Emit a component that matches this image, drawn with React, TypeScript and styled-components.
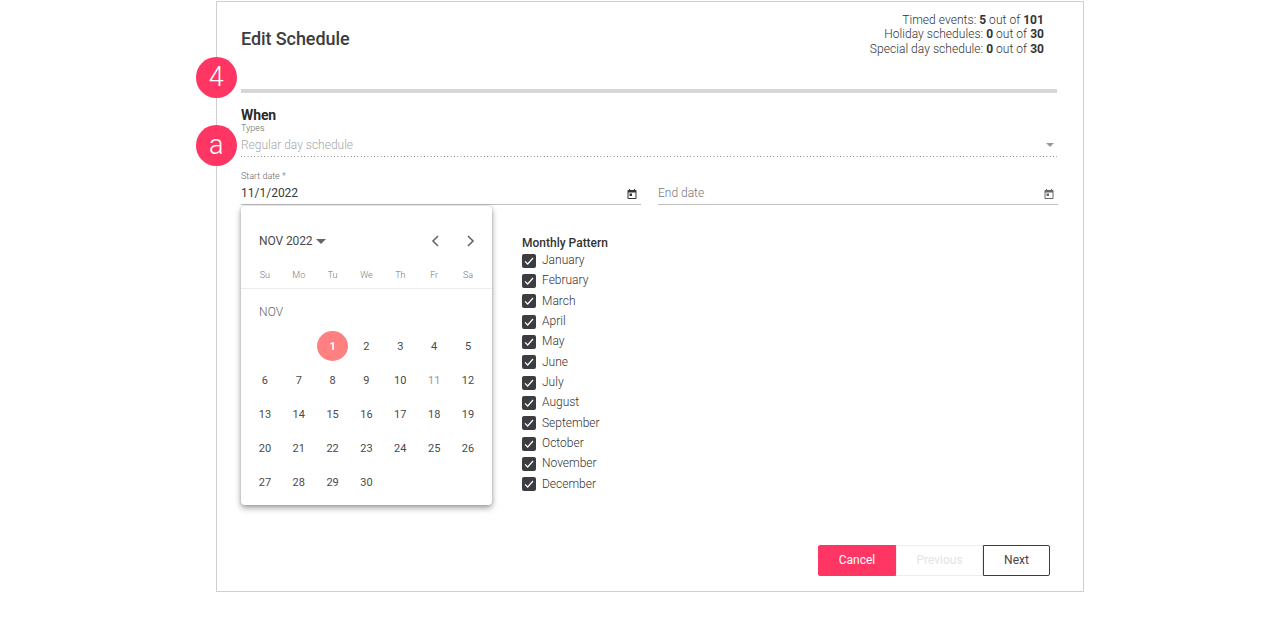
import React from "react";
import styled, { createGlobalStyle } from "styled-components";

const Global = createGlobalStyle`
  html, body { margin: 0; padding: 0; background: #fff; }
  body { font-family: Roboto, "Liberation Sans", sans-serif; color: #333; }
`;

const Frame = styled.div`
  position: relative;
  box-sizing: border-box;
  width: 868px;
  height: 591px;
  margin: 1px 0 0 216px;
  border: 1px solid #cfcfcf;
  padding: 0 26px 0 24px;
  display: flex;
  flex-direction: column;
`;

const Header = styled.header`
  height: 87px;
  flex: none;
  display: flex;
  justify-content: space-between;
  align-items: flex-start;
  padding-right: 13px;
  border-bottom: 4px solid #d6d6d6;
  box-sizing: content-box;
`;

const Title = styled.h1`
  margin: 26px 0 0;
  font-size: 18px;
  line-height: 22px;
  font-weight: 500;
  letter-spacing: -0.08px;
  color: #3c3c41;
`;

const Stats = styled.div`
  margin-top: 11px;
  text-align: right;
  font-size: 12px;
  line-height: 14.4px;
  font-weight: 300;
  letter-spacing: 0.05px;
  color: #333;
  b { font-weight: 700; }
`;

const SectionTitle = styled.h2`
  margin: 14px 0 0;
  font-size: 14px;
  line-height: 16px;
  font-weight: 700;
  letter-spacing: -0.1px;
  color: #2b2b2b;
`;

const SmallLabel = styled.label`
  display: block;
  font-size: 9px;
  line-height: 10px;
  font-weight: 300;
  color: #666;
`;

const SelectField = styled.div`
  width: 816px;
`;

const SelectRow = styled.div`
  height: 23px;
  display: flex;
  align-items: center;
  justify-content: space-between;
  font-size: 12px;
  font-weight: 300;
  color: #a8a8a8;
  padding-bottom: 1px;
  background: linear-gradient(to right, #777 1px, transparent 1px) left bottom / 3.33px 1px repeat-x;
`;

const Caret = styled.span<{ $color: string; $size: number }>`
  display: inline-block;
  width: 0;
  height: 0;
  border-left: ${(p) => p.$size}px solid transparent;
  border-right: ${(p) => p.$size}px solid transparent;
  border-top: ${(p) => p.$size}px solid ${(p) => p.$color};
`;

const SelectCaret = styled(Caret)`
  margin-right: 3px;
`;

const DateRow = styled.div`
  margin-top: 14px;
  width: 817px;
  display: grid;
  grid-template-columns: 400px 400px;
  column-gap: 17px;
  align-items: end;
`;

const DateValue = styled.div<{ $placeholder?: boolean }>`
  height: 23px;
  display: flex;
  align-items: center;
  justify-content: space-between;
  font-size: 12px;
  font-weight: ${(p) => (p.$placeholder ? 300 : 400)};
  color: ${(p) => (p.$placeholder ? "#777" : "#3a3a3a")};
  border-bottom: 1px solid #bdbdbd;
  padding-right: 3px;
  svg { margin-top: 2px; }
`;

const Body = styled.div`
  display: flex;
  align-items: flex-start;
  gap: 30px;
  flex: none;
`;

const Calendar = styled.div`
  width: 251px;
  height: 299px;
  margin-top: 1px;
  border-radius: 4px;
  background: #fff;
  box-shadow: 0 3px 6px rgba(0, 0, 0, 0.38), 0 0 3px rgba(0, 0, 0, 0.14);
  flex: none;
`;

const CalHeader = styled.div`
  height: 70px;
  padding: 0 14px 0 18px;
  display: flex;
  align-items: center;
  justify-content: space-between;
`;

const MonthButton = styled.div`
  display: flex;
  align-items: center;
  gap: 4px;
  font-size: 12px;
  font-weight: 400;
  letter-spacing: -0.1px;
  color: #4a4a4a;
`;

const Arrows = styled.div`
  display: flex;
  gap: 18px;
`;

const Weekdays = styled.div`
  display: grid;
  grid-template-columns: repeat(7, 33.85px);
  padding: 0 0 6px 7px;
  height: 13px;
  margin-top: -7px;
  border-bottom: 1px solid #ececec;
`;

const Weekday = styled.span`
  text-align: center;
  font-size: 9px;
  line-height: 13px;
  font-weight: 300;
  color: #777;
`;

const MonthLabel = styled.div`
  padding: 16px 0 0 18px;
  height: 24px;
  font-size: 12px;
  line-height: 14px;
  font-weight: 300;
  letter-spacing: 0.1px;
  color: #666;
`;

const Days = styled.div`
  display: grid;
  grid-template-columns: repeat(7, 33.85px);
  grid-auto-rows: 34px;
  padding-left: 7px;
`;

const Day = styled.div<{ $selected?: boolean; $muted?: boolean }>`
  display: flex;
  align-items: center;
  justify-content: center;
  font-size: 11px;
  font-weight: ${(p) => (p.$selected ? 700 : 400)};
  color: ${(p) => (p.$selected ? "#fff" : p.$muted ? "#999" : "#4a4a4a")};
  position: relative;
  z-index: 0;
  &::before {
    content: ${(p) => (p.$selected ? '""' : "none")};
    position: absolute;
    z-index: -1;
    width: 31px;
    height: 30px;
    border-radius: 50%;
    background: #ff8080;
    left: 1.5px;
    top: 2px;
  }
`;

const Pattern = styled.div`
  padding-top: 31px;
`;

const PatternTitle = styled.div`
  font-size: 12px;
  line-height: 14px;
  font-weight: 500;
  color: #333;
`;

const CheckRow = styled.div`
  height: 20.33px;
  display: flex;
  align-items: center;
  gap: 6px;
  font-size: 12px;
  font-weight: 300;
  color: #333;
`;

const CheckBox = styled.span`
  width: 14px;
  height: 14px;
  margin-top: 1px;
  border-radius: 2px;
  background: #3c3c41;
  display: flex;
  align-items: center;
  justify-content: center;
`;

const Footer = styled.div`
  display: flex;
  justify-content: flex-end;
  padding-right: 7px;
  margin-top: 40px;
`;

const Button = styled.button<{ $kind: "primary" | "disabled" | "outline"; $width: number }>`
  box-sizing: border-box;
  width: ${(p) => p.$width}px;
  height: 31px;
  padding: 0 0 2px;
  font-family: inherit;
  font-size: 12px;
  font-weight: 400;
  background: ${(p) => (p.$kind === "primary" ? "#ff3663" : "#fff")};
  color: ${(p) => (p.$kind === "primary" ? "#fff" : p.$kind === "disabled" ? "#e4e4e4" : "#444")};
  border: 1px solid ${(p) => (p.$kind === "primary" ? "#ff3663" : p.$kind === "disabled" ? "#ececec" : "#3c3c41")};
  border-radius: ${(p) => (p.$kind === "primary" ? "2px 0 0 2px" : p.$kind === "outline" ? "0 2px 2px 0" : "0")};
`;

const Badge = styled.div<{ $top: number }>`
  position: absolute;
  left: -21px;
  top: ${(p) => p.$top}px;
  width: 40.5px;
  height: 40.5px;
  border-radius: 50%;
  background: #ff3663;
  color: #fff;
  font-size: 27px;
  font-weight: 300;
  display: flex;
  align-items: center;
  justify-content: center;
`;

const CalendarIcon = ({ color }: { color: string }) => (
  <svg width="12" height="12" viewBox="0 0 24 24" fill={color}>
    <path d="M19 4h-1V2h-2v2H8V2H6v2H5a2 2 0 0 0-2 2v14a2 2 0 0 0 2 2h14a2 2 0 0 0 2-2V6a2 2 0 0 0-2-2zm0 16H5V9h14v11zM7 11h5v5H7z" />
  </svg>
);

const Chevron = ({ d }: { d: string }) => (
  <svg width="16" height="16" viewBox="0 0 16 16" fill="none" stroke="#666" strokeWidth="1.6">
    <path d={d} />
  </svg>
);

const Check = () => (
  <svg width="12" height="12" viewBox="0 0 12 12" fill="none" stroke="#fff" strokeWidth="1.2">
    <path d="M2 6.3 4.7 9 10 3" />
  </svg>
);

const weekdays = ["Su", "Mo", "Tu", "We", "Th", "Fr", "Sa"];
const months = ["January", "February", "March", "April", "May", "June", "July", "August", "September", "October", "November", "December"];
const days: (number | null)[] = [null, null, ...Array.from({ length: 30 }, (_, i) => i + 1)];

export default function App() {
  return (
    <>
      <Global />
      <Frame>
        <Badge $top={55}>4</Badge>
        <Badge $top={123}>a</Badge>
        <Header>
          <Title>Edit Schedule</Title>
          <Stats>
            <div>Timed events: <b>5</b> out of <b>101</b></div>
            <div>Holiday schedules: <b>0</b> out of <b>30</b></div>
            <div>Special day schedule: <b>0</b> out of <b>30</b></div>
          </Stats>
        </Header>
        <SectionTitle>When</SectionTitle>
        <SelectField>
          <SmallLabel>Types</SmallLabel>
          <SelectRow>
            Regular day schedule
            <SelectCaret $color="#9a9a9a" $size={4} />
          </SelectRow>
        </SelectField>
        <DateRow>
          <div>
            <SmallLabel>Start date *</SmallLabel>
            <DateValue>11/1/2022<CalendarIcon color="#333" /></DateValue>
          </div>
          <DateValue $placeholder>End date<CalendarIcon color="#666" /></DateValue>
        </DateRow>
        <Body>
          <Calendar>
            <CalHeader>
              <MonthButton>NOV 2022<Caret $color="#666" $size={5} /></MonthButton>
              <Arrows>
                <Chevron d="M10 3 5 8l5 5" />
                <Chevron d="M6 3l5 5-5 5" />
              </Arrows>
            </CalHeader>
            <Weekdays>
              {weekdays.map((w) => <Weekday key={w}>{w}</Weekday>)}
            </Weekdays>
            <MonthLabel>NOV</MonthLabel>
            <Days>
              {days.map((d, i) => (
                <Day key={i} $selected={d === 1} $muted={d === 11}>{d}</Day>
              ))}
            </Days>
          </Calendar>
          <Pattern>
            <PatternTitle>Monthly Pattern</PatternTitle>
            {months.map((m) => (
              <CheckRow key={m}><CheckBox><Check /></CheckBox>{m}</CheckRow>
            ))}
          </Pattern>
        </Body>
        <Footer>
          <Button $kind="primary" $width={78}>Cancel</Button>
          <Button $kind="disabled" $width={87}>Previous</Button>
          <Button $kind="outline" $width={67}>Next</Button>
        </Footer>
      </Frame>
    </>
  );
}
